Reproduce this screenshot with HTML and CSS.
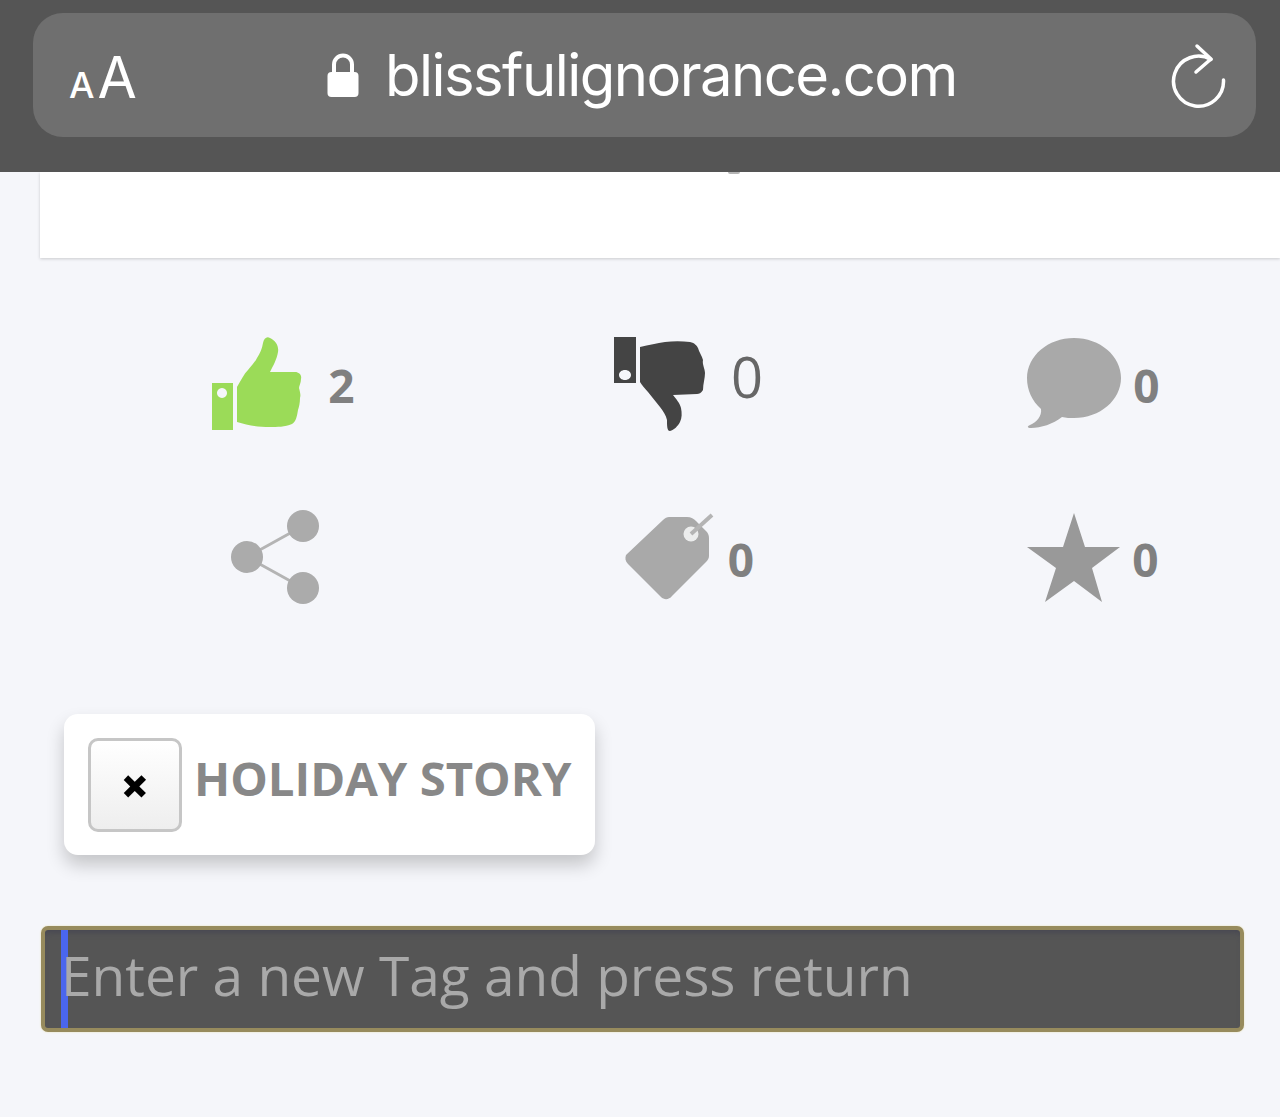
FILE: index.html
```html
<!DOCTYPE html>
<html lang="en">
<head>
<meta charset="utf-8">
<title>blissfulignorance.com</title>
<link rel="stylesheet" href="styles.css">
</head>
<body>
<header class="browser-bar">
  <div class="url-pill">
    <div class="text-size"><span class="a-small">A</span><span class="a-large">A</span></div>
    <div class="address">
      <svg class="lock" viewBox="0 0 32 44" width="32" height="44">
        <path d="M7 20V11.500a9 9 0 0 1 18 0V20" fill="none" stroke="#fff" stroke-width="4"/>
        <rect x="0.500" y="19" width="31" height="25" rx="4" fill="#fff"/>
      </svg>
      <span class="domain">blissfulignorance.com</span>
    </div>
    <svg class="reload" viewBox="0 0 58 66" width="58" height="66">
      <path d="M41 16.500A25 25 0 1 0 53.500 37" fill="none" stroke="#fff" stroke-width="3.500" stroke-linecap="round"/>
      <path d="M27 3L41 16L26 29" fill="none" stroke="#fff" stroke-width="3.500" stroke-linecap="round" stroke-linejoin="round"/>
    </svg>
  </div>
</header>

<section class="card"><span class="cut-descender"></span></section>

<section class="stats">
  <div class="stat stat-up">
    <svg class="icon" viewBox="0 0 92 96" width="92" height="96">
      <path fill="#9bdb58" fill-rule="evenodd" d="M1 47H22V94H1ZM11 52a5 5 0 1 0 .010 0Z"/>
      <path fill="#9bdb58" d="M26 51C30 44 33 38 37 34C41 29 44 26 46 22C49 17 51 13 52 7C53 2 56 0 59 2C65 5 68 10 67 16C66 23 62 30 59 36L84 36C88 36 91 39 90 43C90 47 88 50 88 52C89 56 90 59 89 62C89 67 88 71 87 74C86 80 85 86 81 88C74 91 66 91 59 91C46 91 36 89 26 86Z"/>
    </svg>
    <span class="count count-bold">2</span>
  </div>
  <div class="stat stat-down">
    <svg class="icon" viewBox="0 0 93 96" width="93" height="96">
      <path fill="#444" fill-rule="evenodd" d="M1 1H23V47H1ZM12 34c-3.500 0-6 2.200-6 5s2.500 5 6 5 6-2.200 6-5-2.500-5-6-5Z"/>
      <path fill="#444" d="M27 11C36 9 44 7 52 6C60 5 69 5 77 6C82 7 84 10 85 12C86 16 89 20 90 24C89 28 92 33 92 37C92 42 90 48 90 54C88 57 86 58 84 58L60 59C63 63 67 67 68 72C69 77 69 82 67 86C65 90 61 94 57 95C54 95 54 90 54 84C53 79 50 75 47 71C43 66 39 61 35 56C32 53 29 49 27 46Z"/>
    </svg>
    <span class="count count-light">0</span>
  </div>
  <div class="stat stat-tight">
    <svg class="icon" viewBox="0 0 96 94" width="96" height="94">
      <path fill="#a9a9a9" d="M48 1C74 1 95 19 95 41C95 63 74 81 48 81C44 81 40 81 36 80C27 87 15 91 5 91C1 91 1 89 4 88C11 85 16 79 15 72C6 64 1 53 1 41C1 19 22 1 48 1Z"/>
    </svg>
    <span class="count count-bold">0</span>
  </div>
  <div class="stat">
    <svg class="icon share-icon" viewBox="0 0 90 96" width="90" height="96">
      <path d="M72 16L16 47L72 78" fill="none" stroke="#b4b4b4" stroke-width="3"/>
      <circle cx="72" cy="16" r="16" fill="#ababab"/>
      <circle cx="16" cy="47" r="16" fill="#ababab"/>
      <circle cx="72" cy="78" r="16" fill="#ababab"/>
    </svg>
  </div>
  <div class="stat stat-tag">
    <svg class="icon" viewBox="0 0 90 90" width="90" height="90">
      <path fill="#a9a9a9" d="M1 42L38 7C40 5 42 4 44 4L62 4C66 4 69 6 71 8L81 18C83 20 84 22 84 25L84 43C84 45 83 47 81 49L47 83C44 87 39 87 36 84L3 51C0 48 0 45 1 42Z"/>
      <circle cx="66" cy="21" r="7.500" fill="#eceded"/>
      <path d="M66 21L87 2" stroke="#b4b4b4" stroke-width="4"/>
    </svg>
    <span class="count count-bold">0</span>
  </div>
  <div class="stat stat-tight">
    <svg class="icon" viewBox="0 0 94 90" width="94" height="90">
      <polygon fill="#999" points="47,0 58,34 93,34 65,55 75,89 47,68 18,89 29,55 0,34 36,34"/>
    </svg>
    <span class="count count-bold">0</span>
  </div>
</section>

<div class="tag">
  <button class="tag-remove" type="button">×</button>
  <span class="tag-label">HOLIDAY STORY</span>
</div>

<div class="tag-input">
  <span class="caret"></span>
  <span class="placeholder">Enter a new Tag and press return</span>
</div>
</body>
</html>
```

FILE: styles.css
```css
* { box-sizing: border-box; }

html, body {
  margin: 0;
  height: 1117px;
  overflow: hidden;
}

body {
  background: #f5f6fa;
  font-family: "Open Sans", "Liberation Sans", sans-serif;
}

.browser-bar {
  height: 172px;
  padding: 13px 24px 0 33px;
  background: #555;
  position: relative;
  z-index: 1;
}

.url-pill {
  height: 124px;
  border-radius: 30px;
  background: #6f6f6f;
  color: #fff;
  display: flex;
  align-items: center;
  padding: 0 28px 0 36px;
  font-family: Inter, "Liberation Sans", sans-serif;
}

.text-size {
  width: 66px;
  display: flex;
  align-items: baseline;
  gap: 3px;
  line-height: 1;
  margin-top: 4px;
}

.a-small { font-size: 36px; font-weight: 500; }
.a-large { font-size: 57px; font-weight: 400; }

.address {
  display: flex;
  align-items: center;
  gap: 27px;
  margin-left: 192px;
  flex: 1;
}

.lock { flex: none; }

.domain {
  font-size: 58px;
  line-height: 1;
  font-weight: 400;
  letter-spacing: -1.55px;
  margin-left: -1px;
}

.reload { flex: none; margin-top: 2px; }

.card {
  height: 86px;
  margin-left: 40px;
  background: #fff;
  box-shadow: 0 1px 3px rgba(0, 0, 0, 0.18);
  position: relative;
}

.cut-descender {
  position: absolute;
  left: 688px;
  top: 0;
  width: 12px;
  height: 2px;
  border-radius: 0 0 6px 6px;
  background: #b5b5b5;
}

.stats {
  display: grid;
  grid-template-columns: repeat(3, 407px);
  grid-template-rows: 96px 96px;
  row-gap: 78px;
  margin: 78px -16px 0 76px;
}

.stat {
  display: flex;
  align-items: center;
  justify-content: center;
  gap: 24px;
}

.stat-up { gap: 25px; padding-left: 7px; }
.stat-down { gap: 25px; padding-left: 3px; }
.stat-tight { gap: 11px; padding-right: 1px; }
.stat-tag { gap: 13px; padding-left: 6px; }

.icon { flex: none; }

.share-icon { margin-right: 8px; }

.count {
  line-height: 1;
  color: #808080;
}

.count-bold {
  font-size: 46px;
  font-weight: 700;
  margin-top: 2px;
}

.count-light {
  font-size: 56px;
  font-weight: 400;
  color: #666;
  margin-top: -16px;
}

.tag {
  display: flex;
  align-items: flex-start;
  gap: 12px;
  width: 531px;
  height: 141px;
  margin: 108px 0 0 64px;
  padding: 24px 0 0 24px;
  background: #fff;
  border-radius: 14px;
  box-shadow: 0 10px 18px rgba(0, 0, 0, 0.2);
}

.tag-remove {
  width: 94px;
  height: 94px;
  padding: 0;
  border: 3px solid #c6c6c6;
  border-radius: 10px;
  background: linear-gradient(#fff, #eee);
  color: #000;
  font-family: "Open Sans", sans-serif;
  font-size: 50px;
  font-weight: 800;
  line-height: 80px;
}

.tag-label {
  font-size: 47.300px;
  font-weight: 700;
  line-height: 80px;
  color: #888;
  white-space: nowrap;
}

.tag-input {
  display: flex;
  align-items: stretch;
  width: 1203px;
  height: 106px;
  margin: 71px 0 0 41px;
  padding: 0 0 0 16px;
  background: #555;
  border: 4px solid #978b5d;
  border-radius: 7px;
  box-shadow: 0 0 2px #e8dfb0, inset 0 6px 6px -4px rgba(60, 60, 80, 0.6);
}

.caret {
  width: 7px;
  background: #4a66ee;
  flex: none;
}

.placeholder {
  margin-left: -7px;
  font-size: 55px;
  line-height: 90px;
  color: #a9a9a9;
  white-space: nowrap;
}
```
